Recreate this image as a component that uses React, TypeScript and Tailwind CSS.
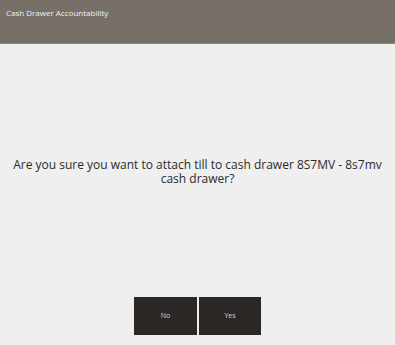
export default function App() {
  return (
    <div className="w-[395px] h-[345px] flex flex-col bg-[#efefef] font-['Open_Sans',sans-serif] overflow-hidden">
      <header className="h-[44px] bg-[#777069] border-b border-[#8a847e] px-[6px] pt-[7px]">
        <h1 className="text-[8px] leading-[12px] text-[#f2f0ee]">Cash Drawer Accountability</h1>
      </header>
      <main className="flex-1 flex flex-col">
        <div className="h-[114px]" />
        <p className="text-[12px] leading-[14px] text-[#2b2b2b] text-center px-[4px]">
          Are you sure you want to attach till to cash drawer 8S7MV - 8s7mv cash drawer?
        </p>
        <div className="flex-1" />
        <div className="flex justify-center gap-[2px] pb-[10px]">
          <button className="w-[63px] h-[38px] bg-[#2b2725] text-[#d8d6d4] text-[7px]">No</button>
          <button className="w-[62px] h-[38px] bg-[#2b2725] text-[#d8d6d4] text-[7px]">Yes</button>
        </div>
      </main>
    </div>
  );
}
